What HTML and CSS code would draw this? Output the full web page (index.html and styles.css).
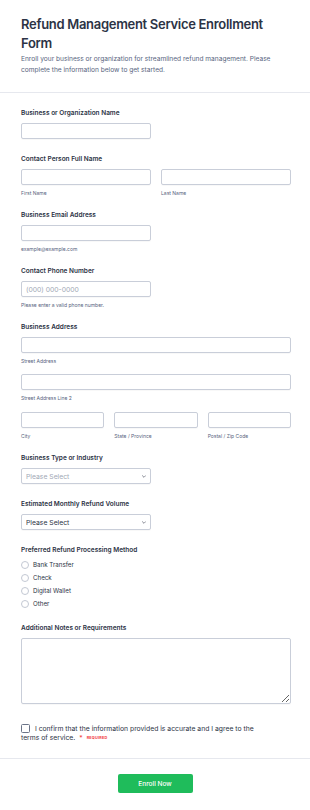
FILE: index.html
```html
<!DOCTYPE html>
<html lang="en">
<head>
  <meta charset="UTF-8">
  <meta name="viewport" content="width=device-width, initial-scale=1.0">
  <title>Refund Management Service Enrollment Form</title>
  <link rel="stylesheet" href="styles.css">
</head>
<body>
  <div class="form-card">
    <!-- Header -->
    <div class="form-header">
      <h1>Refund Management Service Enrollment Form</h1>
      <p>Enroll your business or organization for streamlined refund management. Please complete the information below to get started.</p>
    </div>

    <div class="form-body">
      <div class="field">
        <label class="field-label">Business or Organization Name</label>
        <input type="text" class="input half">
      </div>

      <div class="field">
        <label class="field-label">Contact Person Full Name</label>
        <div class="row two">
          <div>
            <input type="text" class="input">
            <span class="sublabel">First Name</span>
          </div>
          <div>
            <input type="text" class="input">
            <span class="sublabel">Last Name</span>
          </div>
        </div>
      </div>

      <div class="field">
        <label class="field-label">Business Email Address</label>
        <input type="email" class="input half">
        <span class="sublabel">example@example.com</span>
      </div>

      <div class="field">
        <label class="field-label">Contact Phone Number</label>
        <input type="tel" class="input half" placeholder="(000) 000-0000">
        <span class="sublabel">Please enter a valid phone number.</span>
      </div>

      <div class="field">
        <label class="field-label">Business Address</label>
        <input type="text" class="input">
        <span class="sublabel">Street Address</span>
        <input type="text" class="input">
        <span class="sublabel">Street Address Line 2</span>
        <div class="row three">
          <div>
            <input type="text" class="input">
            <span class="sublabel">City</span>
          </div>
          <div>
            <input type="text" class="input">
            <span class="sublabel">State / Province</span>
          </div>
          <div>
            <input type="text" class="input">
            <span class="sublabel">Postal / Zip Code</span>
          </div>
        </div>
      </div>

      <div class="field">
        <label class="field-label">Business Type or Industry</label>
        <div class="select-wrap half">
          <select class="input select placeholder">
            <option>Please Select</option>
          </select>
          <svg class="chevron" viewBox="0 0 10 6"><path d="M1 1l4 4 4-4" fill="none" stroke="#2c3345" stroke-width="1.4" stroke-linecap="round" stroke-linejoin="round"/></svg>
        </div>
      </div>

      <div class="field">
        <label class="field-label">Estimated Monthly Refund Volume</label>
        <div class="select-wrap half">
          <select class="input select">
            <option>Please Select</option>
          </select>
          <svg class="chevron" viewBox="0 0 10 6"><path d="M1 1l4 4 4-4" fill="none" stroke="#2c3345" stroke-width="1.4" stroke-linecap="round" stroke-linejoin="round"/></svg>
        </div>
      </div>

      <div class="field">
        <label class="field-label">Preferred Refund Processing Method</label>
        <div class="radios">
          <label class="radio"><input type="radio" name="method"> Bank Transfer</label>
          <label class="radio"><input type="radio" name="method"> Check</label>
          <label class="radio"><input type="radio" name="method"> Digital Wallet</label>
          <label class="radio"><input type="radio" name="method"> Other</label>
        </div>
      </div>

      <div class="field">
        <label class="field-label">Additional Notes or Requirements</label>
        <textarea class="input textarea"></textarea>
      </div>

      <div class="confirm">
        <input type="checkbox" class="checkbox">
        I confirm that the information provided is accurate and I agree to the terms of service.<span class="star">*</span><span class="required">REQUIRED</span>
      </div>
    </div>

    <!-- Footer -->
    <div class="form-footer">
      <button type="submit" class="submit-btn">Enroll Now</button>
    </div>
  </div>
</body>
</html>
```

FILE: styles.css
```css
/* General Styling */
body {
  margin: 0;
  padding: 0;
  background-color: #ffffff;
  font-family: 'Inter', 'Noto Sans', sans-serif;
  color: #2c3345;
}
.form-card {
  width: 310px;
}
/* Header */
.form-header {
  padding: 15px 21px 16px;
  border-bottom: 1px solid #e6e8ee;
}
.form-header h1 {
  margin: 0;
  font-size: 13px;
  line-height: 19px;
  letter-spacing: -0.3px;
  font-weight: 600;
  color: #2c3345;
}
.form-header p {
  margin: 1px 0 0;
  font-size: 6.6px;
  line-height: 11px;
  color: #57647e;
}
/* Fields */
.form-body {
  padding: 15px 19px 0 21px;
}
.field {
  margin-bottom: 15px;
}
.field-label {
  display: block;
  font-size: 6.5px;
  line-height: 10px;
  font-weight: 600;
  color: #2c3345;
  margin-bottom: 5px;
}
.input {
  display: block;
  box-sizing: border-box;
  width: 100%;
  height: 16px;
  margin: 0;
  padding: 0 4px;
  border: 1px solid #c9ced9;
  border-radius: 2px;
  background: #fff;
  font-family: inherit;
  font-size: 6.8px;
  color: #2c3345;
  box-shadow: 0 1px 1px rgba(0, 0, 0, 0.03);
}
.input::placeholder {
  color: #a2a9b6;
}
.half {
  width: 130px;
}
.sublabel {
  display: block;
  font-size: 5px;
  line-height: 6px;
  color: #57647e;
  margin: 5px 0 -1px;
}
.sublabel + .input {
  margin-top: 11px;
}
.row {
  display: grid;
  gap: 10px;
}
.row.two {
  grid-template-columns: 1fr 1fr;
}
.row.three {
  grid-template-columns: 1fr 1fr 1fr;
  margin-top: 12px;
}
/* Select */
.select-wrap {
  position: relative;
}
.select {
  appearance: none;
  -webkit-appearance: none;
  padding-left: 4px;
}
.select.placeholder {
  color: #a2a9b6;
}
.chevron {
  position: absolute;
  right: 5px;
  top: 7px;
  width: 4px;
  height: 3px;
}
/* Radios */
.radios {
  display: flex;
  flex-direction: column;
  gap: 5px;
  padding-top: 1px;
}
.radio {
  display: flex;
  align-items: center;
  gap: 4px;
  font-size: 6.2px;
  line-height: 8px;
  color: #2c3345;
}
.radio input {
  appearance: none;
  -webkit-appearance: none;
  width: 8px;
  height: 8px;
  margin: 0;
  border: 1px solid #c3c8d3;
  border-radius: 50%;
  background: #fff;
}
/* Textarea */
.textarea {
  height: 66px;
  resize: vertical;
  padding: 4px;
}
/* Confirm */
.confirm {
  width: 245px;
  margin-top: 20px;
  font-size: 6.8px;
  line-height: 9px;
  color: #2c3345;
  padding-bottom: 16px;
}
.checkbox {
  appearance: none;
  -webkit-appearance: none;
  width: 9px;
  height: 9px;
  margin: 0 3px 0 0;
  vertical-align: -2px;
  border: 1px solid #6b7488;
  border-radius: 1.5px;
  background: #fff;
}
.star {
  color: #f23a3c;
  margin-left: 4px;
}
.required {
  display: inline-block;
  margin-left: 4px;
  color: #f23a3c;
  font-size: 3.8px;
  line-height: 4px;
  font-weight: 700;
  letter-spacing: 0.2px;
  vertical-align: 1px;
}
/* Footer */
.form-footer {
  border-top: 1px solid #e6e8ee;
  padding: 15px 0 17px;
}
.submit-btn {
  display: block;
  margin: 0 auto;
  width: 75px;
  height: 19px;
  border: none;
  border-radius: 2px;
  background: #1fbc5b;
  color: #ffffff;
  font-family: inherit;
  font-size: 6.5px;
  font-weight: 500;
  cursor: pointer;
}
```
